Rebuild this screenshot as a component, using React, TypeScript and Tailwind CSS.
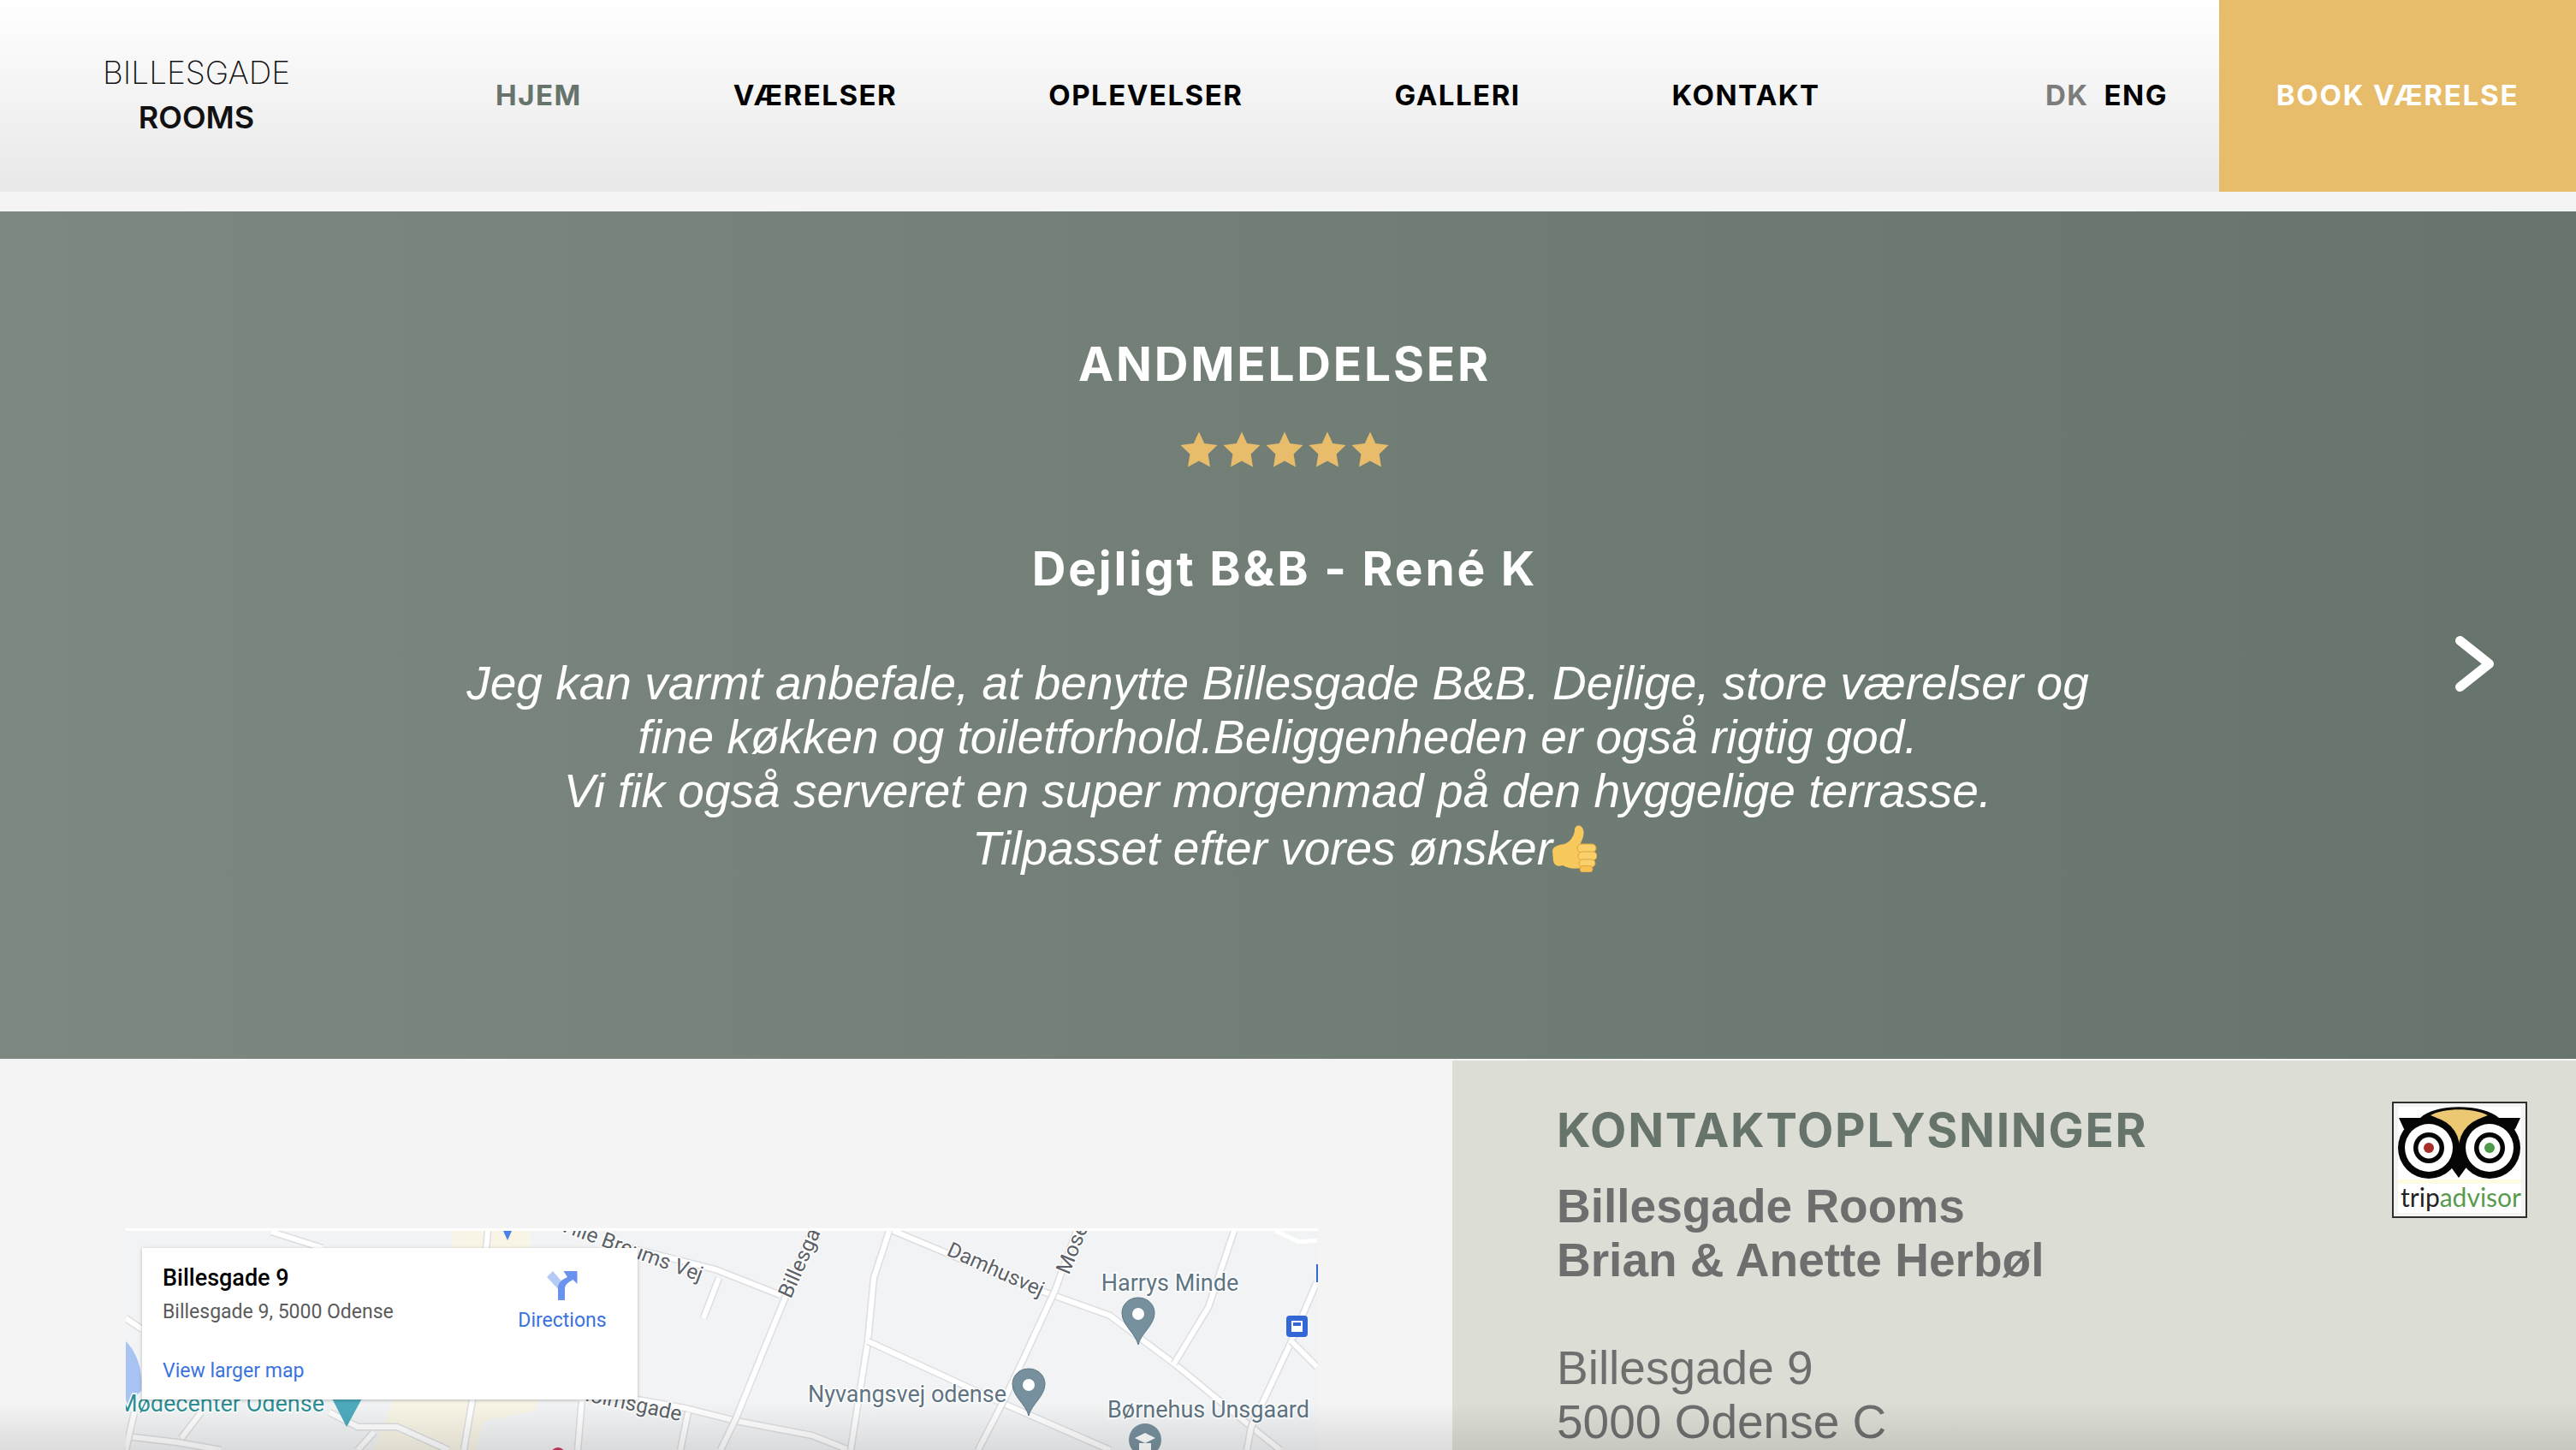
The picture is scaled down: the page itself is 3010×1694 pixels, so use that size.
const montserrat = "font-['Inter','Liberation_Sans',sans-serif]";

const navItems = [
  { label: "HJEM", active: true },
  { label: "VÆRELSER" },
  { label: "OPLEVELSER" },
  { label: "GALLERI" },
  { label: "KONTAKT" },
];

const Star = () => (
  <svg width="44" height="42" viewBox="0 0 44 42" className="shrink-0">
    <path d="M22 0.5 L28.2 14 L43.5 16 L32.6 26.6 L35 41.5 L22 34.4 L9 41.5 L11.4 26.6 L0.5 16 L15.8 14 Z" fill="#e7bd6b" />
  </svg>
);

const ThumbsUp = () => (
  <svg width="52" height="55" viewBox="0 0 52 55" className="inline-block shrink-0">
    <path d="M0 30 C1 24 8 23 14 22 C20 20 25 14 26 6 C26 1 31 -1 34 2 C38 6 37 13 33 21 L33 50 C25 52 18 50 12 47 C7 49 2 47 1 42 Z" fill="#f7c95c" />
    <rect x="29" y="22" width="22" height="10" rx="5" fill="#fad06a" stroke="#e0a23c" strokeWidth="1" />
    <rect x="30" y="31" width="22" height="10" rx="5" fill="#fad06a" stroke="#e0a23c" strokeWidth="1" />
    <rect x="31" y="40" width="19" height="9" rx="4.5" fill="#fad06a" stroke="#e0a23c" strokeWidth="1" />
    <rect x="32" y="47.5" width="15" height="7.5" rx="3.7" fill="#f5c355" stroke="#e0a23c" strokeWidth="1" />
  </svg>
);

const Road = ({ d }: { d: string }) => (
  <>
    <path d={d} fill="none" stroke="#dcdee1" strokeWidth="9" />
    <path d={d} fill="none" stroke="#ffffff" strokeWidth="6" />
  </>
);

const Pin = ({ x, y }: { x: number; y: number }) => (
  <g transform={`translate(${x} ${y})`}>
    <path d="M0 55 C-3 42 -19 32 -19 18 C-19 8 -11 0 0 0 C11 0 19 8 19 18 C19 32 3 42 0 55 Z" fill="#77909e" stroke="#5f7785" strokeWidth="1" />
    <circle cx="0" cy="19" r="7" fill="#ffffff" />
  </g>
);

// map drawn in page coordinates, shifted by the viewBox origin
const MapDrawing = () => (
  <svg width="1393" height="259" viewBox="147 1435 1393 259" className="block">
    <rect x="147" y="1435" width="1393" height="259" fill="#f1f3f4" />
    <path d="M529 1438 H620 V1458 H640 V1635 H630 L625 1648 L565 1660 L556 1694 H437 L460 1635 H400 V1458 H529 Z" fill="#f8f5e6" />
    <path d="M147 1567 C160 1580 167 1600 165 1625 L147 1642 Z" fill="#a9c4f2" />
    <Road d="M317 1439 L377 1458" />
    <Road d="M147 1540 L166 1553" />
    <Road d="M147 1678 L207 1685 L258 1694" />
    <Road d="M235 1650 L212 1680" />
    <Road d="M157 1650 L147 1694" />
    <Road d="M385 1650 L418 1667 L464 1667 L524 1694" />
    <Road d="M418 1694 L437 1673" />
    <Road d="M570 1438 L552 1635 L542 1694" />
    <Road d="M680 1635 L675 1694" />
    <Road d="M690 1625 L800 1645 L860 1660 L949 1677 L992 1694" />
    <Road d="M804 1650 L795 1694" />
    <Road d="M717 1453 L836 1483 L912 1513" />
    <Road d="M840 1493 L822 1540" />
    <Road d="M949 1438 L917 1517 L890 1583 L860 1657 L842 1694" />
    <Road d="M1039 1438 L1021 1493 L1014 1567 L994 1694" />
    <Road d="M1014 1567 L1173 1640 L1297 1694" />
    <Road d="M1044 1438 L1180 1495 L1297 1537 L1372 1593 L1462 1667 L1496 1694" />
    <Road d="M1258 1438 L1233 1507 L1198 1583 L1171 1640 L1143 1694" />
    <Road d="M1442 1438 L1412 1527 L1372 1593" />
    <Road d="M1539 1497 L1509 1567 L1462 1667 L1457 1694" />
    <Road d="M1509 1567 L1539 1597" />
    <path d="M1490 1438 L1518 1451 L1539 1449" fill="none" stroke="#ffffff" strokeWidth="5" />

    <g className="font-['Roboto',sans-serif]" fill="#5b6166" fontSize="24.5" stroke="#ffffff" strokeWidth="3" paintOrder="stroke">
      <text x="652" y="1437" transform="rotate(20 652 1437)">Ville Breums Vej</text>
      <text x="1105" y="1466" transform="rotate(24 1105 1466)">Damhusvej</text>
      <text x="924" y="1518" transform="rotate(-66 924 1518)">Billesgade</text>
      <text x="1249" y="1490" transform="rotate(-68 1249 1490)">Mosevej</text>
      <text x="672" y="1634" transform="rotate(12 672 1634)">Holmsgade</text>
    </g>
    <g className="font-['Roboto',sans-serif]" fill="#5e7482" fontSize="27" stroke="#ffffff" strokeWidth="3" paintOrder="stroke">
      <text x="1367" y="1508" textAnchor="middle">Harrys Minde</text>
      <text x="1176" y="1638" textAnchor="end">Nyvangsvej odense</text>
      <text x="1412" y="1656" textAnchor="middle">Børnehus Unsgaard</text>
    </g>
    <text x="379" y="1649" textAnchor="end" fontSize="27" fill="#2d8f95" stroke="#ffffff" strokeWidth="3" paintOrder="stroke" className="font-['Roboto',sans-serif]">Mødecenter Odense</text>
    <path d="M386 1630 H425 L405 1667 Z" fill="#4daabd" />
    <path d="M588 1438 H598 L593 1449 Z" fill="#4a80e8" />
    <circle cx="652" cy="1700" r="9" fill="#c93b5c" />
    <Pin x={1330} y={1516} />
    <Pin x={1202} y={1599} />
    <circle cx="1338" cy="1682" r="19" fill="#77909e" />
    <path d="M1326 1680 L1338 1674 L1350 1680 L1338 1686 Z M1331 1686 H1345 V1694 H1331 Z" fill="#ffffff" />
    <rect x="1503" y="1537" width="25" height="25" rx="4" fill="#3367d6" />
    <path d="M1509 1543 H1522 V1556 H1509 Z" fill="#ffffff" />
    <rect x="1511" y="1545" width="9" height="4" fill="#3367d6" />
    <rect x="1538" y="1477" width="2" height="21" fill="#3367d6" />
    <rect x="147" y="1435" width="1393" height="3" fill="#ffffff" />
  </svg>
);

const MapCard = () => (
  <div className="absolute left-[19px] top-[23px] h-[177px] w-[579px] bg-white shadow-[0_1px_4px_rgba(0,0,0,0.25)] font-['Roboto',sans-serif]">
    <div className="absolute left-[24px] top-[22px] text-[27px] leading-[26px] font-medium text-black">Billesgade 9</div>
    <div className="absolute left-[24px] top-[63px] text-[23px] leading-[24px] text-[#5b5b5b]">Billesgade 9, 5000 Odense</div>
    <div className="absolute left-[24px] top-[132px] text-[23px] leading-[24px] text-[#3a72e0]">View larger map</div>
    <div className="absolute left-[431px] top-[27px] flex w-[120px] flex-col items-center">
      <svg width="36" height="34" viewBox="0 0 36 34">
        <path d="M0 7 L7 0 L20 15 L14 22 Z" fill="#b5cbf6" />
        <path d="M13 34 V20 C13 14 17 10 24 7 L19.5 0 H35.5 V15 L30.5 10 C25 13 21 16 21 21 V34 Z" fill="#6a92ee" />
      </svg>
      <div className="mt-[12px] text-[23px] leading-[24px] text-[#3a72e0]">Directions</div>
    </div>
  </div>
);

const TripAdvisor = () => (
  <svg width="158" height="136" viewBox="0 0 158 136" className="absolute right-[57px] top-[48px]">
    <rect x="1" y="1" width="156" height="134" fill="#f3f3f1" stroke="#2e2e2e" strokeWidth="2" />
    <rect x="7" y="6" width="144" height="124" fill="#ffffff" />
    <rect x="7" y="91" width="144" height="5" fill="#fdfbe0" />
    <path d="M8 19 H33 C50 2 106 2 125 19 H150 L144 32 L114 50 L86 78 L78 89 L70 78 L43 50 L14 32 Z" fill="#050505" />
    <path d="M45 16 C60 7 96 7 112 16 C94 22 83 32 78 50 C73 32 62 22 45 16 Z" fill="#ecc873" />
    <circle cx="43" cy="54" r="36" fill="#050505" />
    <circle cx="43" cy="54" r="28" fill="#ffffff" />
    <circle cx="43" cy="54" r="18" fill="#050505" />
    <circle cx="43" cy="54" r="12.5" fill="#ffffff" />
    <circle cx="43" cy="54" r="6" fill="#a5302a" />
    <circle cx="114" cy="54" r="36" fill="#050505" />
    <circle cx="114" cy="54" r="28" fill="#ffffff" />
    <circle cx="114" cy="54" r="18" fill="#050505" />
    <circle cx="114" cy="54" r="12.5" fill="#ffffff" />
    <circle cx="114" cy="54" r="6" fill="#4f9a4a" />
    <text x="10" y="123" fontSize="30" className="font-['Lato',sans-serif]">
      <tspan fill="#232323">trip</tspan>
      <tspan fill="#5b9a4e">advisor</tspan>
    </text>
  </svg>
);

export default function App() {
  return (
    <div className="relative h-[1694px] w-[3010px] overflow-hidden bg-[#f4f4f4]">
      <header className="flex h-[224px] bg-gradient-to-b from-white to-[#e8e8e8]">
        <div className={`flex w-[459px] flex-col items-center pt-[59px] text-[37px] leading-[52px] text-[#111] ${montserrat}`}>
          <span className="font-extralight">BILLESGADE</span>
          <span className="text-[36px] font-semibold">ROOMS</span>
        </div>
        <nav className={`flex flex-1 items-center gap-[177px] pl-[120px] text-[33px] font-bold tracking-[1.5px] text-black ${montserrat}`}>
          {navItems.map((item) => (
            <a key={item.label} className={item.active ? "text-[#66746b]" : ""}>
              {item.label}
            </a>
          ))}
        </nav>
        <div className={`flex items-center gap-[18px] pr-[60px] text-[33px] font-bold tracking-[1.5px] ${montserrat}`}>
          <span className="text-[#7c7c7c]">DK</span>
          <span className="text-black">ENG</span>
        </div>
        <div className={`flex w-[417px] items-center justify-center text-[33px] font-bold tracking-[1.8px] text-white bg-[#e7bd6b] ${montserrat}`}>
          BOOK VÆRELSE
        </div>
      </header>

      <section className="relative mt-[23px] flex h-[990px] flex-col items-center bg-gradient-to-r from-[#7d8880] to-[#66746b] pr-[8px] pt-[148px] text-white">
        <h2 className={`text-[55px] leading-[60px] font-bold tracking-[2.8px] ${montserrat}`}>ANDMELDELSER</h2>
        <div className="mt-[49px] flex gap-[6px]">
          <Star />
          <Star />
          <Star />
          <Star />
          <Star />
        </div>
        <h3 className={`mt-[85px] text-[55px] leading-[66px] font-bold tracking-[2.8px] ${montserrat}`}>Dejligt B&amp;B - René K</h3>
        <div className="mt-[70px] flex flex-col items-center text-[55px] leading-[63px] italic font-['Liberation_Sans',sans-serif]">
          <p className="pr-[16px]">Jeg kan varmt anbefale, at benytte Billesgade B&amp;B. Dejlige, store værelser og</p>
          <p className="pr-[16px]">fine køkken og toiletforhold.Beliggenheden er også rigtig god.</p>
          <p className="pr-[16px]">Vi fik også serveret en super morgenmad på den hyggelige terrasse.</p>
          <p className="mt-[4px] flex items-center">
            Tilpasset efter vores ønsker
            <ThumbsUp />
          </p>
        </div>
        <svg width="45" height="65" viewBox="0 0 45 65" className="absolute left-[2869px] top-[496px]">
          <path d="M5.5 5.5 L39.5 32.5 L5.5 59.5" fill="none" stroke="#ffffff" strokeWidth="11" strokeLinecap="round" strokeLinejoin="round" />
        </svg>
      </section>

      <section className="flex h-[457px] pt-[2px]">
        <div className="w-[1697px] pl-[147px] pt-[196px]">
          <div className="relative w-[1393px]">
            <MapDrawing />
            <MapCard />
          </div>
        </div>
        <div className="relative flex-1 bg-[#dcded5] pl-[122px] pt-[50px] font-['Liberation_Sans',sans-serif] text-[55px] leading-[63px] text-[#6e6e6e]">
          <h2 className={`mb-[26px] text-[55px] leading-[63px] font-bold tracking-[1.7px] text-[#66746b] ${montserrat}`}>KONTAKTOPLYSNINGER</h2>
          <p className="font-bold">Billesgade Rooms</p>
          <p className="font-bold">Brian &amp; Anette Herbøl</p>
          <p className="mt-[63px]">Billesgade 9</p>
          <p>5000 Odense C</p>
          <TripAdvisor />
        </div>
      </section>

      {/* fade at the bottom edge of the capture */}
      <div className="pointer-events-none absolute inset-x-0 bottom-0 h-[55px] bg-gradient-to-b from-transparent to-black/10" />
    </div>
  );
}
